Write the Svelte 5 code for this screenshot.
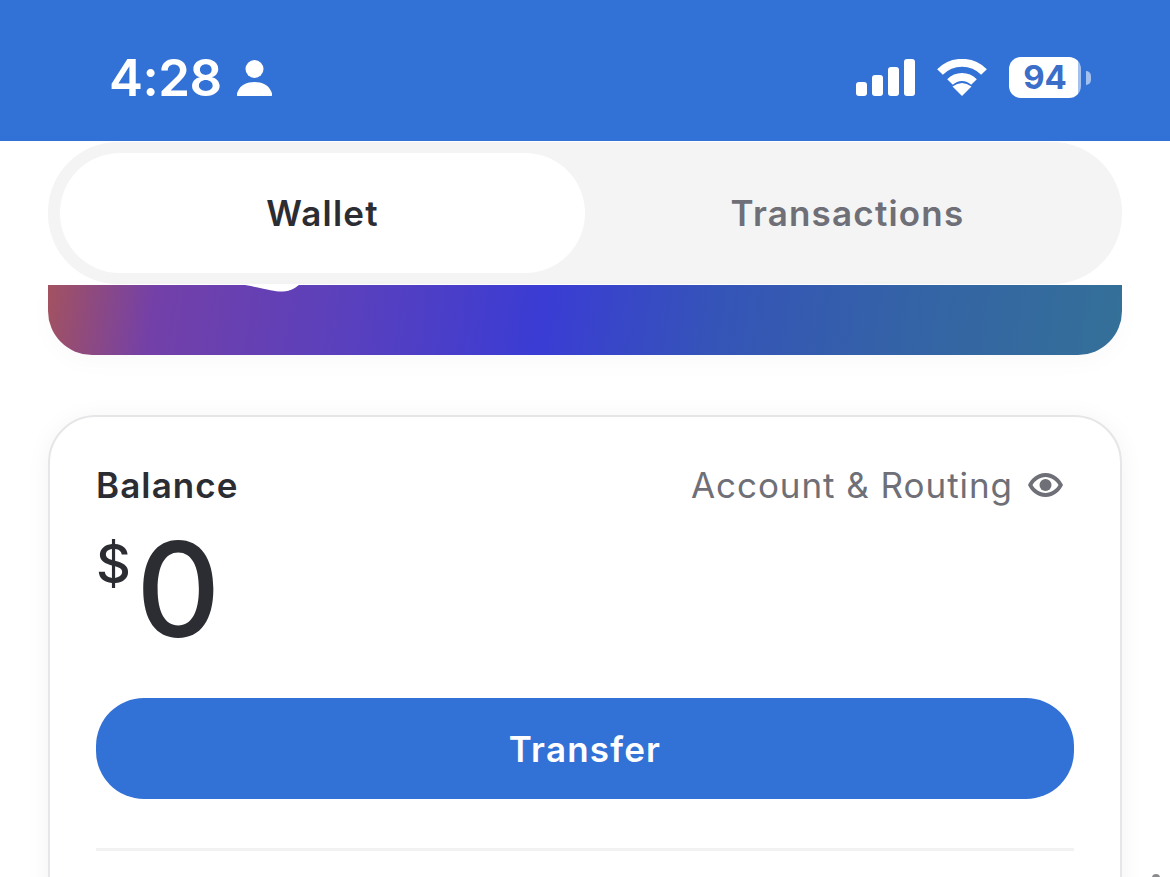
<script>
  let tabs = ['Wallet', 'Transactions'];
  let active = 'Wallet';
  const bars = [14, 21, 29, 37];
</script>

<div class="page">
  <header class="status">
    <div class="left">
      <span class="time">4:28</span>
      <svg class="person" viewBox="0 0 35 36" width="35" height="36">
        <circle cx="17.5" cy="9" r="9" fill="#fff" />
        <path d="M1 36 C-1 36 0 33 1 31 C3.500 25 10 22 17.500 22 C25 22 31.500 25 34 31 C35 33 36 36 34 36 Z" fill="#fff" />
      </svg>
    </div>
    <div class="right">
      <div class="signal">
        {#each bars as h}
          <span class="bar" style="height: {h}px"></span>
        {/each}
      </div>
      <svg class="wifi" viewBox="0 0 50 37" width="50" height="37">
        <path d="M3 13 A31 31 0 0 1 47 13" fill="none" stroke="#fff" stroke-width="8" />
        <path d="M13 23 A17 17 0 0 1 37 23" fill="none" stroke="#fff" stroke-width="8" />
        <path d="M25 37 L15.500 27.500 Q25 20.500 34.500 27.500 Z" fill="#fff" />
      </svg>
      <div class="battery">
        <div class="cell">94</div>
        <span class="nub"></span>
      </div>
    </div>
  </header>

  <nav class="segment">
    {#each tabs as tab}
      <button class="tab" class:active={tab === active}>{tab}</button>
    {/each}
  </nav>

  <div class="banner">
    <svg class="notch" viewBox="0 0 54 7" width="54" height="7">
      <path d="M0 0 H54 C50 3 46 6 38 6.500 C30 7 22 4 0 0 Z" fill="#fff" />
    </svg>
  </div>

  <section class="card">
    <div class="row">
      <span class="label">Balance</span>
      <span class="link">
        Account &amp; Routing
        <svg viewBox="0 0 35 24" width="35" height="24">
          <path fill-rule="evenodd" d="M17.500 0 C26 0 32 6 35 12 C32 18 26 24 17.500 24 C9 24 3 18 0 12 C3 6 9 0 17.500 0 Z M17.500 4 C12 4 6.500 8 4.500 12 C6.500 16 12 20 17.500 20 C23 20 28.500 16 30.500 12 C28.500 8 23 4 17.500 4 Z" fill="#6e6f77" />
          <circle cx="17.500" cy="12" r="6" fill="#6e6f77" />
        </svg>
      </span>
    </div>
    <div class="amount"><span class="currency">$</span><span class="value">0</span></div>
    <button class="transfer">Transfer</button>
    <div class="divider"></div>
  </section>

  <span class="speck"></span>
</div>

<style>
  :global(body) {
    margin: 0;
    overflow: hidden;
    background: #fff;
  }

  .page {
    position: relative;
    height: 877px;
    overflow: hidden;
    font-family: Inter, "Liberation Sans", sans-serif;
    background: #fff;
  }

  .status {
    box-sizing: border-box;
    height: 141px;
    padding: 14px 79px 0 109px;
    display: flex;
    justify-content: space-between;
    align-items: center;
    background: #3271d6;
    color: #fff;
  }

  .left {
    display: flex;
    align-items: center;
    gap: 15px;
  }

  .time {
    font-size: 51px;
    font-weight: 600;
    letter-spacing: -0.5px;
    line-height: 1;
  }

  .right {
    display: flex;
    align-items: center;
    gap: 22px;
  }

  .signal {
    display: flex;
    align-items: flex-end;
    gap: 5px;
    height: 37px;
  }

  .bar {
    width: 11px;
    border-radius: 3px;
    background: #fff;
  }

  .battery {
    display: flex;
    align-items: center;
    gap: 5px;
  }

  .cell {
    width: 72px;
    height: 41px;
    border-radius: 12px;
    display: flex;
    align-items: center;
    justify-content: center;
    background: linear-gradient(90deg, #fff 96%, #a3c0ee 96%);
    color: #3a6ec8;
    font-size: 33px;
    font-weight: 700;
    line-height: 1;
  }

  .nub {
    width: 5px;
    height: 14px;
    border-radius: 0 7px 7px 0;
    background: #a3c0ee;
  }

  .segment {
    box-sizing: border-box;
    height: 142px;
    margin: 1px 48px 0;
    padding: 11px 12px;
    display: grid;
    grid-template-columns: 525px 1fr;
    background: #f4f4f5;
    border-radius: 70px;
  }

  .tab {
    border: 0;
    padding: 0;
    background: none;
    font: 600 35px Inter, "Liberation Sans", sans-serif;
    letter-spacing: 1.2px;
    color: #6e6f77;
    border-radius: 60px;
  }

  .tab.active {
    background: #fff;
    color: #2c2d33;
  }

  .banner {
    position: relative;
    height: 70px;
    margin: 1px 48px 0;
    border-radius: 0 0 44px 44px;
    background: linear-gradient(98deg, #a35260 0%, #7340a8 10%, #5a40bd 28%, #3a3cd4 46%, #3554b8 62%, #3463a6 80%, #347098 100%);
    box-shadow: 0 8px 24px rgba(0, 0, 0, 0.025);
  }

  .notch {
    position: absolute;
    left: 197px;
    top: 0;
  }

  .card {
    box-sizing: border-box;
    height: 520px;
    margin: 60px 48px 0;
    padding: 46px 46px 0;
    background: #fff;
    border: 2px solid #e6e6e8;
    border-radius: 48px;
    box-shadow: 0 2px 24px rgba(0, 0, 0, 0.05);
  }

  .row {
    display: flex;
    justify-content: space-between;
    align-items: center;
    height: 44px;
  }

  .label {
    font-size: 35px;
    font-weight: 600;
    letter-spacing: 1.1px;
    color: #2c2d33;
  }

  .link {
    display: flex;
    align-items: center;
    gap: 15px;
    margin-right: 11px;
    font-size: 35px;
    font-weight: 400;
    letter-spacing: 0.95px;
    color: #6e6f77;
  }

  .amount {
    display: flex;
    align-items: flex-start;
    height: 116px;
    margin-top: 25px;
    color: #2c2d33;
  }

  .currency {
    font-size: 54px;
    font-weight: 500;
    line-height: 1;
    margin-top: 5px;
  }

  .value {
    font-size: 131px;
    font-weight: 500;
    line-height: 116px;
    margin-left: 5px;
  }

  .transfer {
    display: block;
    width: 100%;
    height: 101px;
    margin-top: 50px;
    border: 0;
    border-radius: 48px;
    background: #3271d6;
    color: #fff;
    font: 600 35px Inter, "Liberation Sans", sans-serif;
    letter-spacing: 1.2px;
  }

  .divider {
    height: 3px;
    margin-top: 49px;
    background: #f2f2f3;
  }

  .speck {
    position: absolute;
    left: 1152px;
    top: 874px;
    width: 8px;
    height: 8px;
    border-radius: 50%;
    background: #8a8a8e;
  }
</style>
